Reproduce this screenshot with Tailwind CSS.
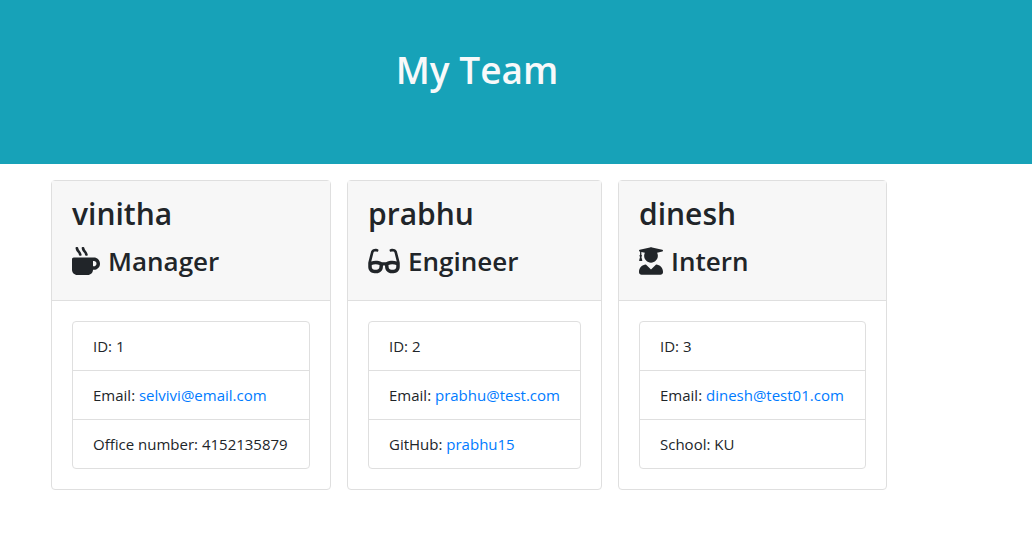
<!DOCTYPE html>
<html lang="en">
<head>
<meta charset="utf-8">
<meta name="viewport" content="width=device-width, initial-scale=1">
<title>My Team</title>
<script src="https://cdn.jsdelivr.net/npm/@tailwindcss/browser@4"></script>
</head>
<body class="bg-white font-['Open_Sans','Noto_Sans',sans-serif] text-[15px] leading-6 text-[#212529]">
<header class="bg-[#17a2b8] pt-[42px] pr-[78px] pb-[66px]">
  <h1 class="text-center text-[37px] leading-14 font-semibold text-[#f8f9fa]">My Team</h1>
</header>
<main class="flex flex-wrap items-start gap-4 py-4 pl-[51px]">
  <section class="w-[280px] rounded border border-[#dfdfdf]">
    <div class="border-b border-[#dfdfdf] bg-[#f7f7f7] px-5 pt-[13px] pb-[19px]">
      <h2 class="mb-[7px] text-[30px] leading-10 font-semibold">vinitha</h2>
      <h3 class="flex items-center gap-2 text-[26px] leading-10 font-semibold">
        <svg class="h-7 w-7" viewBox="0 0 512 512" fill="currentColor" aria-hidden="true"><path d="M127.1 146.5c1.3 7.7 8 13.5 16 13.5h16.5c9.8 0 17.6-8.5 16.3-18-3.8-28.2-16.4-54.2-36.6-74.7-14.4-14.7-23.6-33.3-26.4-53.5C111.8 5.9 105 0 96.8 0H80.4C70.6 0 63 8.5 64.1 18c3.9 31.9 18 61.3 40.6 84.4 12 12.2 19.7 27.5 22.4 44.1zm112 0c1.3 7.7 8 13.5 16 13.5h16.5c9.8 0 17.6-8.5 16.3-18-3.8-28.2-16.4-54.2-36.6-74.7-14.4-14.7-23.6-33.3-26.4-53.5C223.8 5.9 217 0 208.8 0h-16.4c-9.8 0-17.5 8.5-16.3 18 3.9 31.9 18 61.3 40.6 84.4 12 12.2 19.7 27.5 22.4 44.1zM400 192H32c-17.7 0-32 14.3-32 32v192c0 53 43 96 96 96h192c53 0 96-43 96-96h16c61.8 0 112-50.2 112-112s-50.2-112-112-112zm0 160h-16v-96h16c26.5 0 48 21.5 48 48s-21.5 48-48 48z"/></svg>
        Manager
      </h3>
    </div>
    <div class="p-5">
      <ul class="divide-y divide-[#dfdfdf] rounded border border-[#dfdfdf]">
        <li class="px-5 py-3">ID: 1</li>
        <li class="px-5 py-3">Email: <a class="text-[#007bff]" href="mailto:selvivi@email.com">selvivi@email.com</a></li>
        <li class="px-5 py-3 whitespace-nowrap">Office number: 4152135879</li>
      </ul>
    </div>
  </section>
  <section class="w-[255px] rounded border border-[#dfdfdf]">
    <div class="border-b border-[#dfdfdf] bg-[#f7f7f7] px-5 pt-[13px] pb-[19px]">
      <h2 class="mb-[7px] text-[30px] leading-10 font-semibold">prabhu</h2>
      <h3 class="flex items-center gap-2 text-[26px] leading-10 font-semibold">
        <svg class="h-7 w-8" viewBox="0 0 576 512" fill="currentColor" aria-hidden="true"><path d="M574.1 280.37L528.75 98.66c-5.91-23.7-21.59-44.05-43-55.81-21.44-11.73-46.97-14.11-70.19-6.33l-15.25 5.08c-8.39 2.79-12.92 11.86-10.12 20.24l5.06 15.18c2.79 8.38 11.85 12.91 20.23 10.12l13.18-4.39c10.87-3.62 23-3.57 33.16 1.73 10.29 5.37 17.57 14.56 20.37 25.82l38.46 153.82c-22.19-6.81-49.79-12.46-81.2-12.46-34.77 0-73.98 7.02-114.85 26.74h-73.18c-40.87-19.74-80.08-26.75-114.86-26.75-31.42 0-59.02 5.65-81.21 12.46l38.46-153.83c2.79-11.25 10.09-20.45 20.38-25.81 10.16-5.3 22.28-5.35 33.15-1.73l13.17 4.39c8.38 2.79 17.44-1.74 20.23-10.12l5.06-15.18c2.8-8.38-1.73-17.45-10.12-20.24l-15.25-5.08c-23.22-7.78-48.75-5.41-70.19 6.33-21.41 11.77-37.09 32.11-43 55.8L1.9 280.37A64.218 64.218 0 0 0 0 295.86v70.25C0 429.01 51.58 480 115.2 480h37.12c60.28 0 110.37-45.94 114.88-105.37l2.93-38.63h35.75l2.93 38.63C313.31 434.06 363.4 480 423.68 480h37.12c63.62 0 115.2-50.99 115.2-113.88v-70.25c0-5.23-.64-10.43-1.9-15.5zm-370.72 89.42c-1.97 25.91-24.4 46.21-51.06 46.21H115.2C86.97 416 64 393.62 64 366.11v-37.54c18.12-6.49 43.42-12.92 72.58-12.92 23.86 0 47.26 4.33 69.93 12.92l-3.13 41.22zM512 366.12c0 27.51-22.97 49.88-51.2 49.88h-37.12c-26.67 0-49.1-20.3-51.06-46.21l-3.13-41.22c22.67-8.59 46.08-12.92 69.95-12.92 29.12 0 54.43 6.44 72.55 12.93v37.54z"/></svg>
        Engineer
      </h3>
    </div>
    <div class="p-5">
      <ul class="divide-y divide-[#dfdfdf] rounded border border-[#dfdfdf]">
        <li class="px-5 py-3">ID: 2</li>
        <li class="px-5 py-3 whitespace-nowrap">Email: <a class="text-[#007bff]" href="mailto:prabhu@test.com">prabhu@test.com</a></li>
        <li class="px-5 py-3">GitHub: <a class="text-[#007bff]" href="https://github.com/prabhu15">prabhu15</a></li>
      </ul>
    </div>
  </section>
  <section class="w-[269px] rounded border border-[#dfdfdf]">
    <div class="border-b border-[#dfdfdf] bg-[#f7f7f7] px-5 pt-[13px] pb-[19px]">
      <h2 class="mb-[7px] text-[30px] leading-10 font-semibold">dinesh</h2>
      <h3 class="flex items-center gap-2 text-[26px] leading-10 font-semibold">
        <svg class="h-7 w-6" viewBox="0 0 448 512" fill="currentColor" aria-hidden="true"><path d="M319.4 320.6L224 416l-95.4-95.4C57.1 323.7 0 382.2 0 454.4v9.6c0 26.5 21.5 48 48 48h352c26.5 0 48-21.5 48-48v-9.6c0-72.2-57.1-130.7-128.6-133.8zM13.6 79.8l6.4 1.5v58.4c-7 4.2-12 11.5-12 20.3 0 8.4 4.6 15.4 11.1 19.7L3.5 242c-1.7 6.9 2.1 14 7.6 14h41.8c5.5 0 9.3-7.1 7.6-14l-15.6-62.3C51.4 175.4 56 168.4 56 160c0-8.8-5-16.1-12-20.3V87.1l66 15.9c-8.6 17.2-14 36.4-14 57 0 70.7 57.3 128 128 128s128-57.3 128-128c0-20.6-5.3-39.8-14-57l96.3-23.2c18.2-4.4 18.2-27.1 0-31.5l-190.4-46c-13-3.1-26.7-3.1-39.7 0L13.6 48.2c-18.1 4.4-18.1 27.2 0 31.6z"/></svg>
        Intern
      </h3>
    </div>
    <div class="p-5">
      <ul class="divide-y divide-[#dfdfdf] rounded border border-[#dfdfdf]">
        <li class="px-5 py-3">ID: 3</li>
        <li class="px-5 py-3 whitespace-nowrap">Email: <a class="text-[#007bff]" href="mailto:dinesh@test01.com">dinesh@test01.com</a></li>
        <li class="px-5 py-3">School: KU</li>
      </ul>
    </div>
  </section>
</main>
</body>
</html>
